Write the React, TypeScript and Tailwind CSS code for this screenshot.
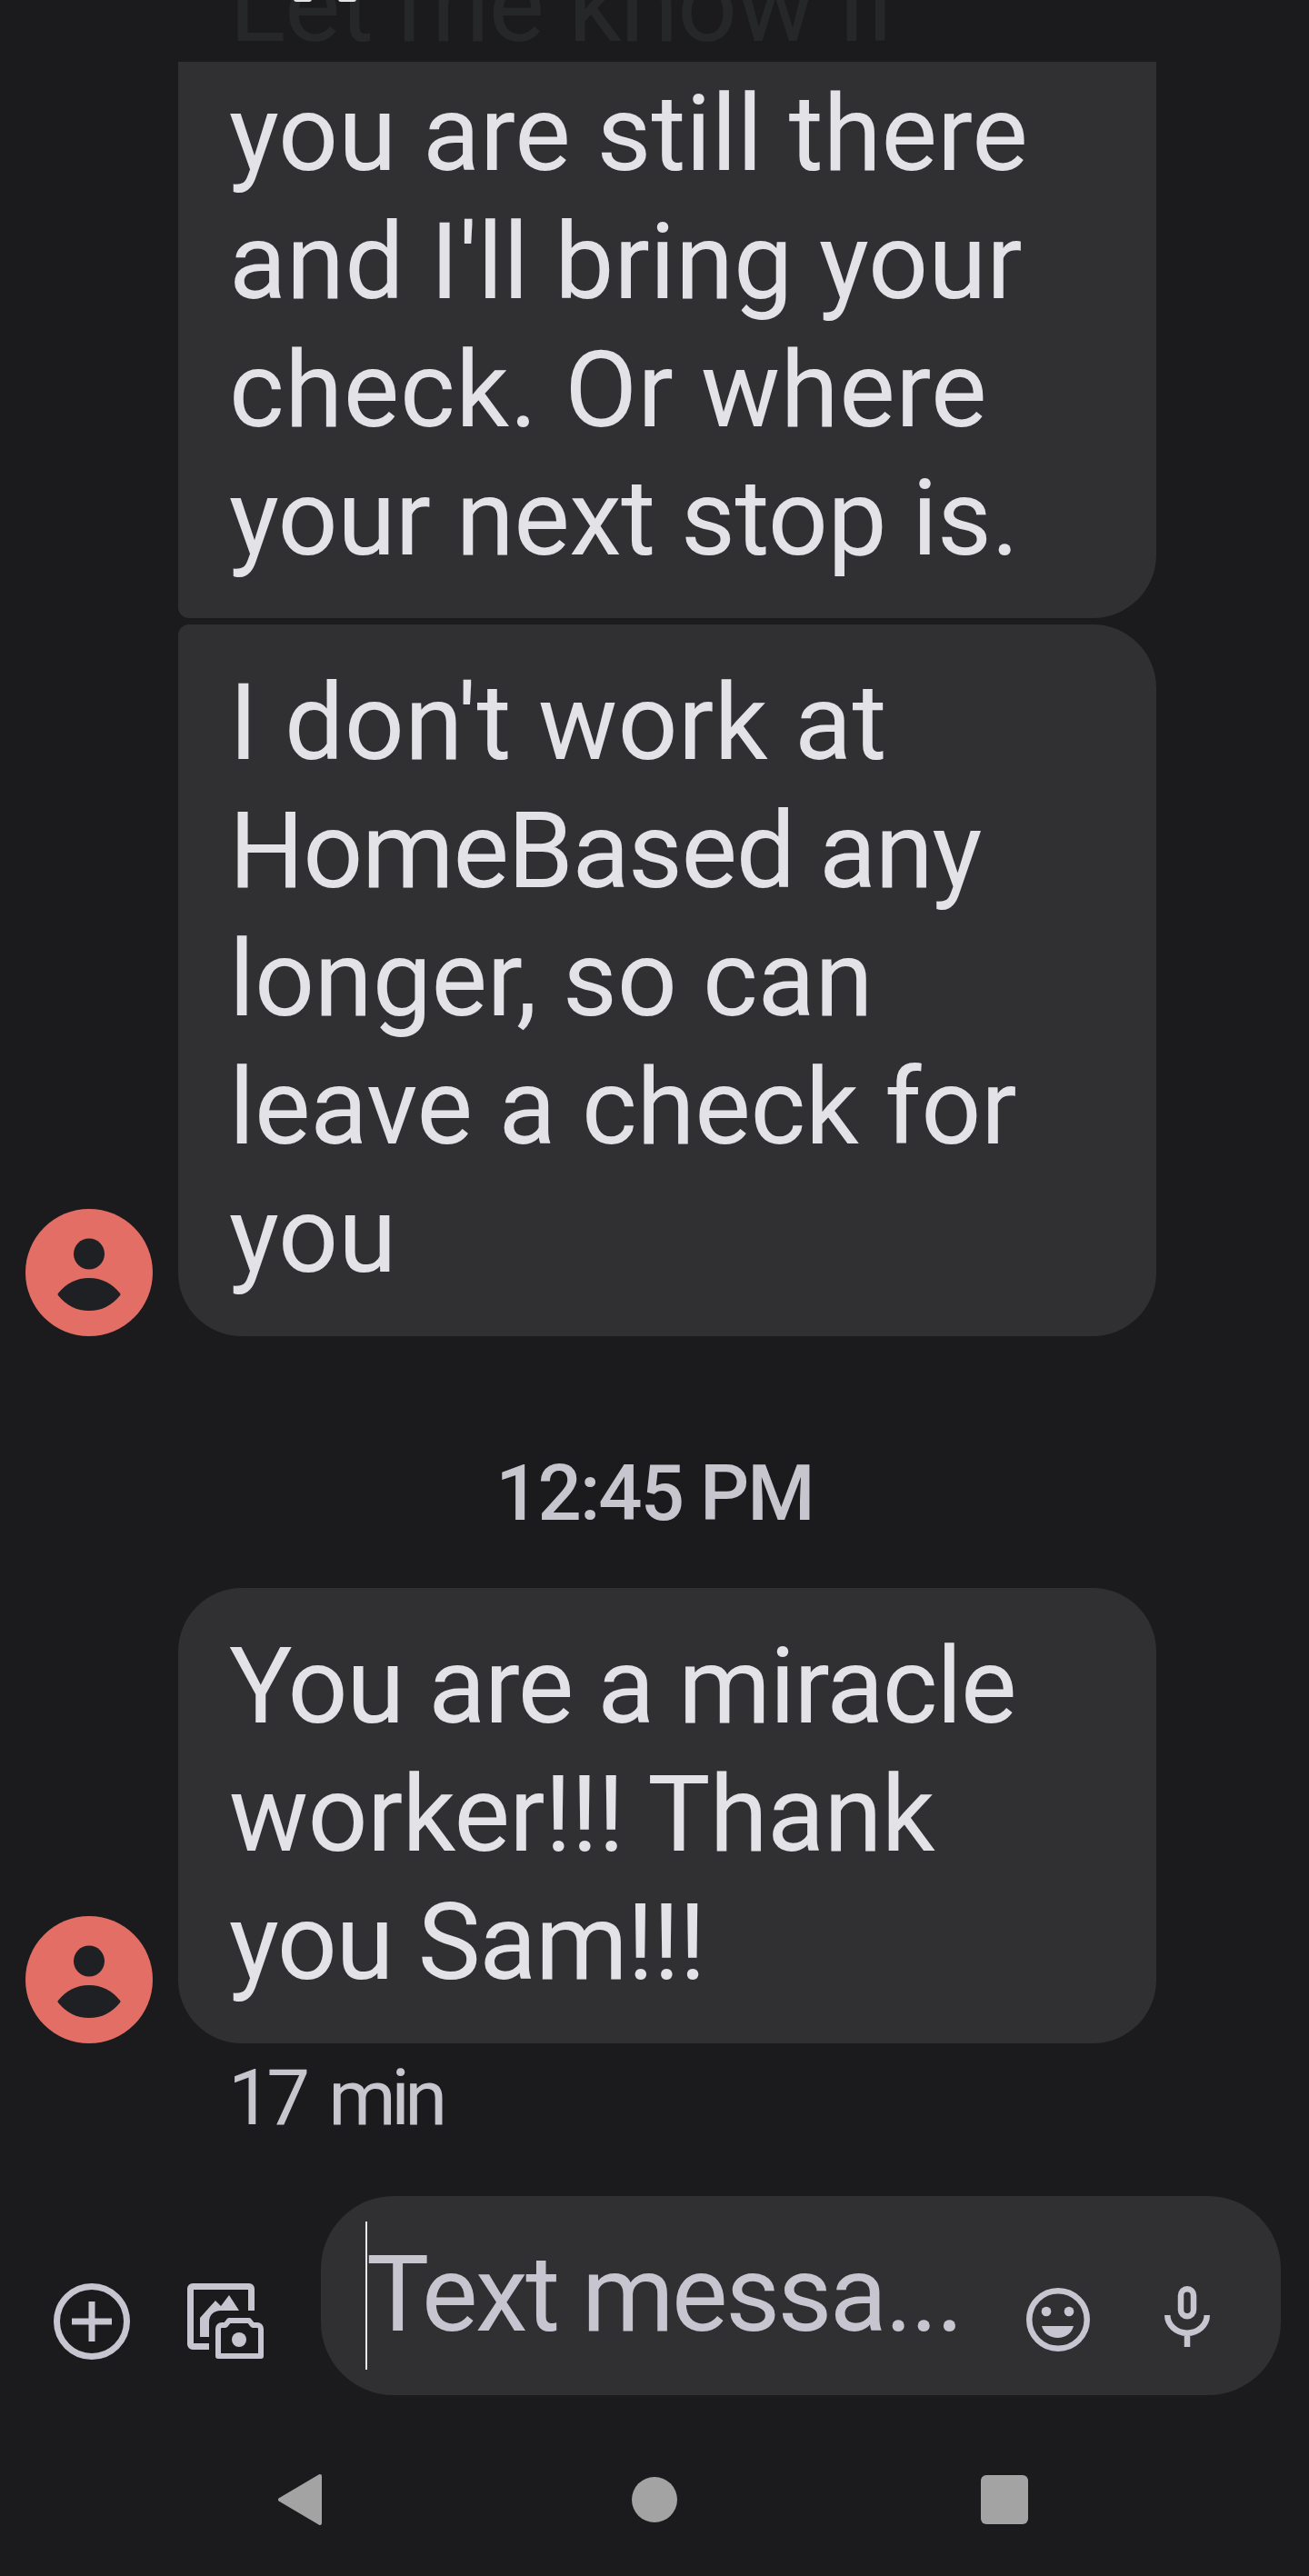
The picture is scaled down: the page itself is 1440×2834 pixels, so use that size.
const font = { fontFamily: '"Roboto", "Liberation Sans", sans-serif' };

function Avatar() {
  return (
    <svg width="140" height="140" viewBox="0 0 140 140" className="shrink-0">
      <circle cx="70" cy="70" r="70" fill="#e26e65" />
      <circle cx="70" cy="49.500" r="17" fill="#1f2023" />
      <path d="M37 94 C45 84 56 77.500 70 77.500 C84 77.500 95 84 103 94 C95 104 84 110.500 70 110.500 C56 110.500 45 104 37 94 Z" fill="#1f2023" stroke="#1f2023" strokeWidth="3" strokeLinejoin="round" />
    </svg>
  );
}

type Line = { t: string; c?: string };

function Bubble({ lines, className }: { lines: Line[]; className: string }) {
  return (
    <div className={`w-[1076px] bg-[#303033] pl-[56px] text-[#e3e2e6] text-[116px] leading-[141px] ${className}`}>
      {lines.map((l) => (
        <div key={l.t} className={`whitespace-nowrap ${l.c ?? ""}`}>{l.t}</div>
      ))}
    </div>
  );
}

export default function App() {
  return (
    <div style={font} className="w-[1440px] h-[2834px] bg-[#1b1b1d] overflow-hidden flex flex-col relative">
      <div className="absolute left-[323px] top-[-4px] w-[20px] h-[6px] rounded-full bg-[#e3e2e6]" />
      <div className="absolute left-[372px] top-[-4px] w-[20px] h-[6px] rounded-full bg-[#e3e2e6]" />

      <div className="h-[68px] pl-[252px] overflow-hidden flex flex-col justify-end shrink-0">
        <div className="text-[116px] leading-[141px] text-[#262729] whitespace-nowrap -mb-[8px] tracking-[-1.400px]">Let me know if</div>
      </div>

      <div className="pl-[196px]">
        <Bubble
          className="pt-[9px] h-[612px] rounded-br-[70px] rounded-bl-[12px]"
          lines={[
            { t: "you are still there" },
            { t: "and I'll bring your" },
            { t: "check. Or where", c: "tracking-[0.600px]" },
            { t: "your next stop is.", c: "tracking-[-0.500px]" },
          ]}
        />
      </div>

      <div className="mt-[7px] pl-[28px] flex items-end gap-[28px]">
        <Avatar />
        <Bubble
          className="pt-[38px] h-[783px] rounded-[70px] rounded-tl-[12px]"
          lines={[
            { t: "I don't work at", c: "tracking-[0.360px]" },
            { t: "HomeBased any", c: "tracking-[-1.400px]" },
            { t: "longer, so can", c: "tracking-[-0.250px]" },
            { t: "leave a check for", c: "tracking-[-0.200px]" },
            { t: "you" },
          ]}
        />
      </div>

      <div className="mt-[133px] text-center text-[#c7c6ce] text-[85px] leading-[80px] font-medium tracking-[-2px]">12:45 PM</div>

      <div className="mt-[64px] pl-[28px] flex items-end gap-[28px]">
        <Avatar />
        <Bubble
          className="pt-[38px] h-[501px] rounded-[70px]"
          lines={[
            { t: "You are a miracle", c: "tracking-[-1.400px]" },
            { t: "worker!!! Thank", c: "tracking-[-0.700px]" },
            { t: "you Sam!!!", c: "tracking-[-1.300px]" },
          ]}
        />
      </div>

      <div className="pl-[251px] mt-[15px] text-[#c7c6ce] text-[85px] leading-[90px] tracking-[-5.500px] [word-spacing:10px]">17 min</div>

      <div className="mt-[63px] flex items-end pl-[59px]">
        <div className="flex items-center gap-[63px] h-[84px] mb-[39px]">
          <svg width="84" height="84" viewBox="0 0 84 84" fill="none" stroke="#c7c6d0" strokeWidth="7">
            <circle cx="42" cy="42" r="38.500" />
            <path d="M42 20v44M20 42h44" />
          </svg>
          <svg width="84" height="84" viewBox="0 0 84 84" fill="none" stroke="#c7c6d0" strokeWidth="7">
            <path d="M24 69.500H6a2.500 2.500 0 0 1-2.500-2.500V6A2.500 2.500 0 0 1 6 3.500h62A2.500 2.500 0 0 1 70.500 6V30" />
            <path d="M14 59V38L31 19l6 6 9-12 11 17H37c-8 0-13 5-13 13v16z" fill="#c7c6d0" stroke="none" />
            <path d="M34 80V50a4 4 0 0 1 4-4h4l4-5h22l4 5h5a4 4 0 0 1 4 4v30z" strokeLinejoin="round" strokeWidth="6" fill="#1b1b1d" />
            <circle cx="57" cy="62" r="8" fill="#c7c6d0" stroke="none" />
          </svg>
        </div>
        <div className="ml-[63px] w-[1056px] h-[219px] rounded-[80px] bg-[#303033] flex items-center relative">
          <div className="absolute left-[49px] top-[28px] w-[2px] h-[163px] bg-[#e8e8ea]" />
          <div className="pl-[50px] text-[#c7c6d0] text-[116px] leading-[141px] -mt-[2px] w-[776px] whitespace-nowrap tracking-[-2.500px]">Text messa...</div>
          <svg width="70" height="70" viewBox="0 0 70 70" className="shrink-0 mt-[53px]">
            <circle cx="35" cy="35" r="31.750" fill="none" stroke="#c7c6d0" strokeWidth="6.500" />
            <circle cx="22" cy="26" r="5.300" fill="#c7c6d0" />
            <circle cx="47" cy="26" r="5.300" fill="#c7c6d0" />
            <path d="M17 42h35c-2 8-9 13-17.500 13S19 50 17 42z" fill="#c7c6d0" />
          </svg>
          <svg width="50" height="67" viewBox="0 0 50 67" fill="none" stroke="#c7c6d0" strokeWidth="6.500" className="shrink-0 ml-[82px] mt-[46px]">
            <rect x="18" y="3.250" width="14" height="30" rx="7" />
            <path d="M3.250 32c0 11 10 19.750 21.750 19.750S46.750 43 46.750 32M25 51v16" />
          </svg>
        </div>
      </div>

      <div className="mt-[87px] flex items-center pl-[306px]">
        <svg width="48" height="56" viewBox="0 0 48 56">
          <path d="M46 2 L2 28 L46 54Z" fill="#a3a3a3" stroke="#a3a3a3" strokeWidth="4" strokeLinejoin="round" />
        </svg>
        <div className="ml-[341px] w-[50px] h-[50px] rounded-full bg-[#a3a3a3]" />
        <div className="ml-[334px] w-[52px] h-[54px] rounded-[6px] bg-[#a3a3a3]" />
      </div>
    </div>
  );
}
